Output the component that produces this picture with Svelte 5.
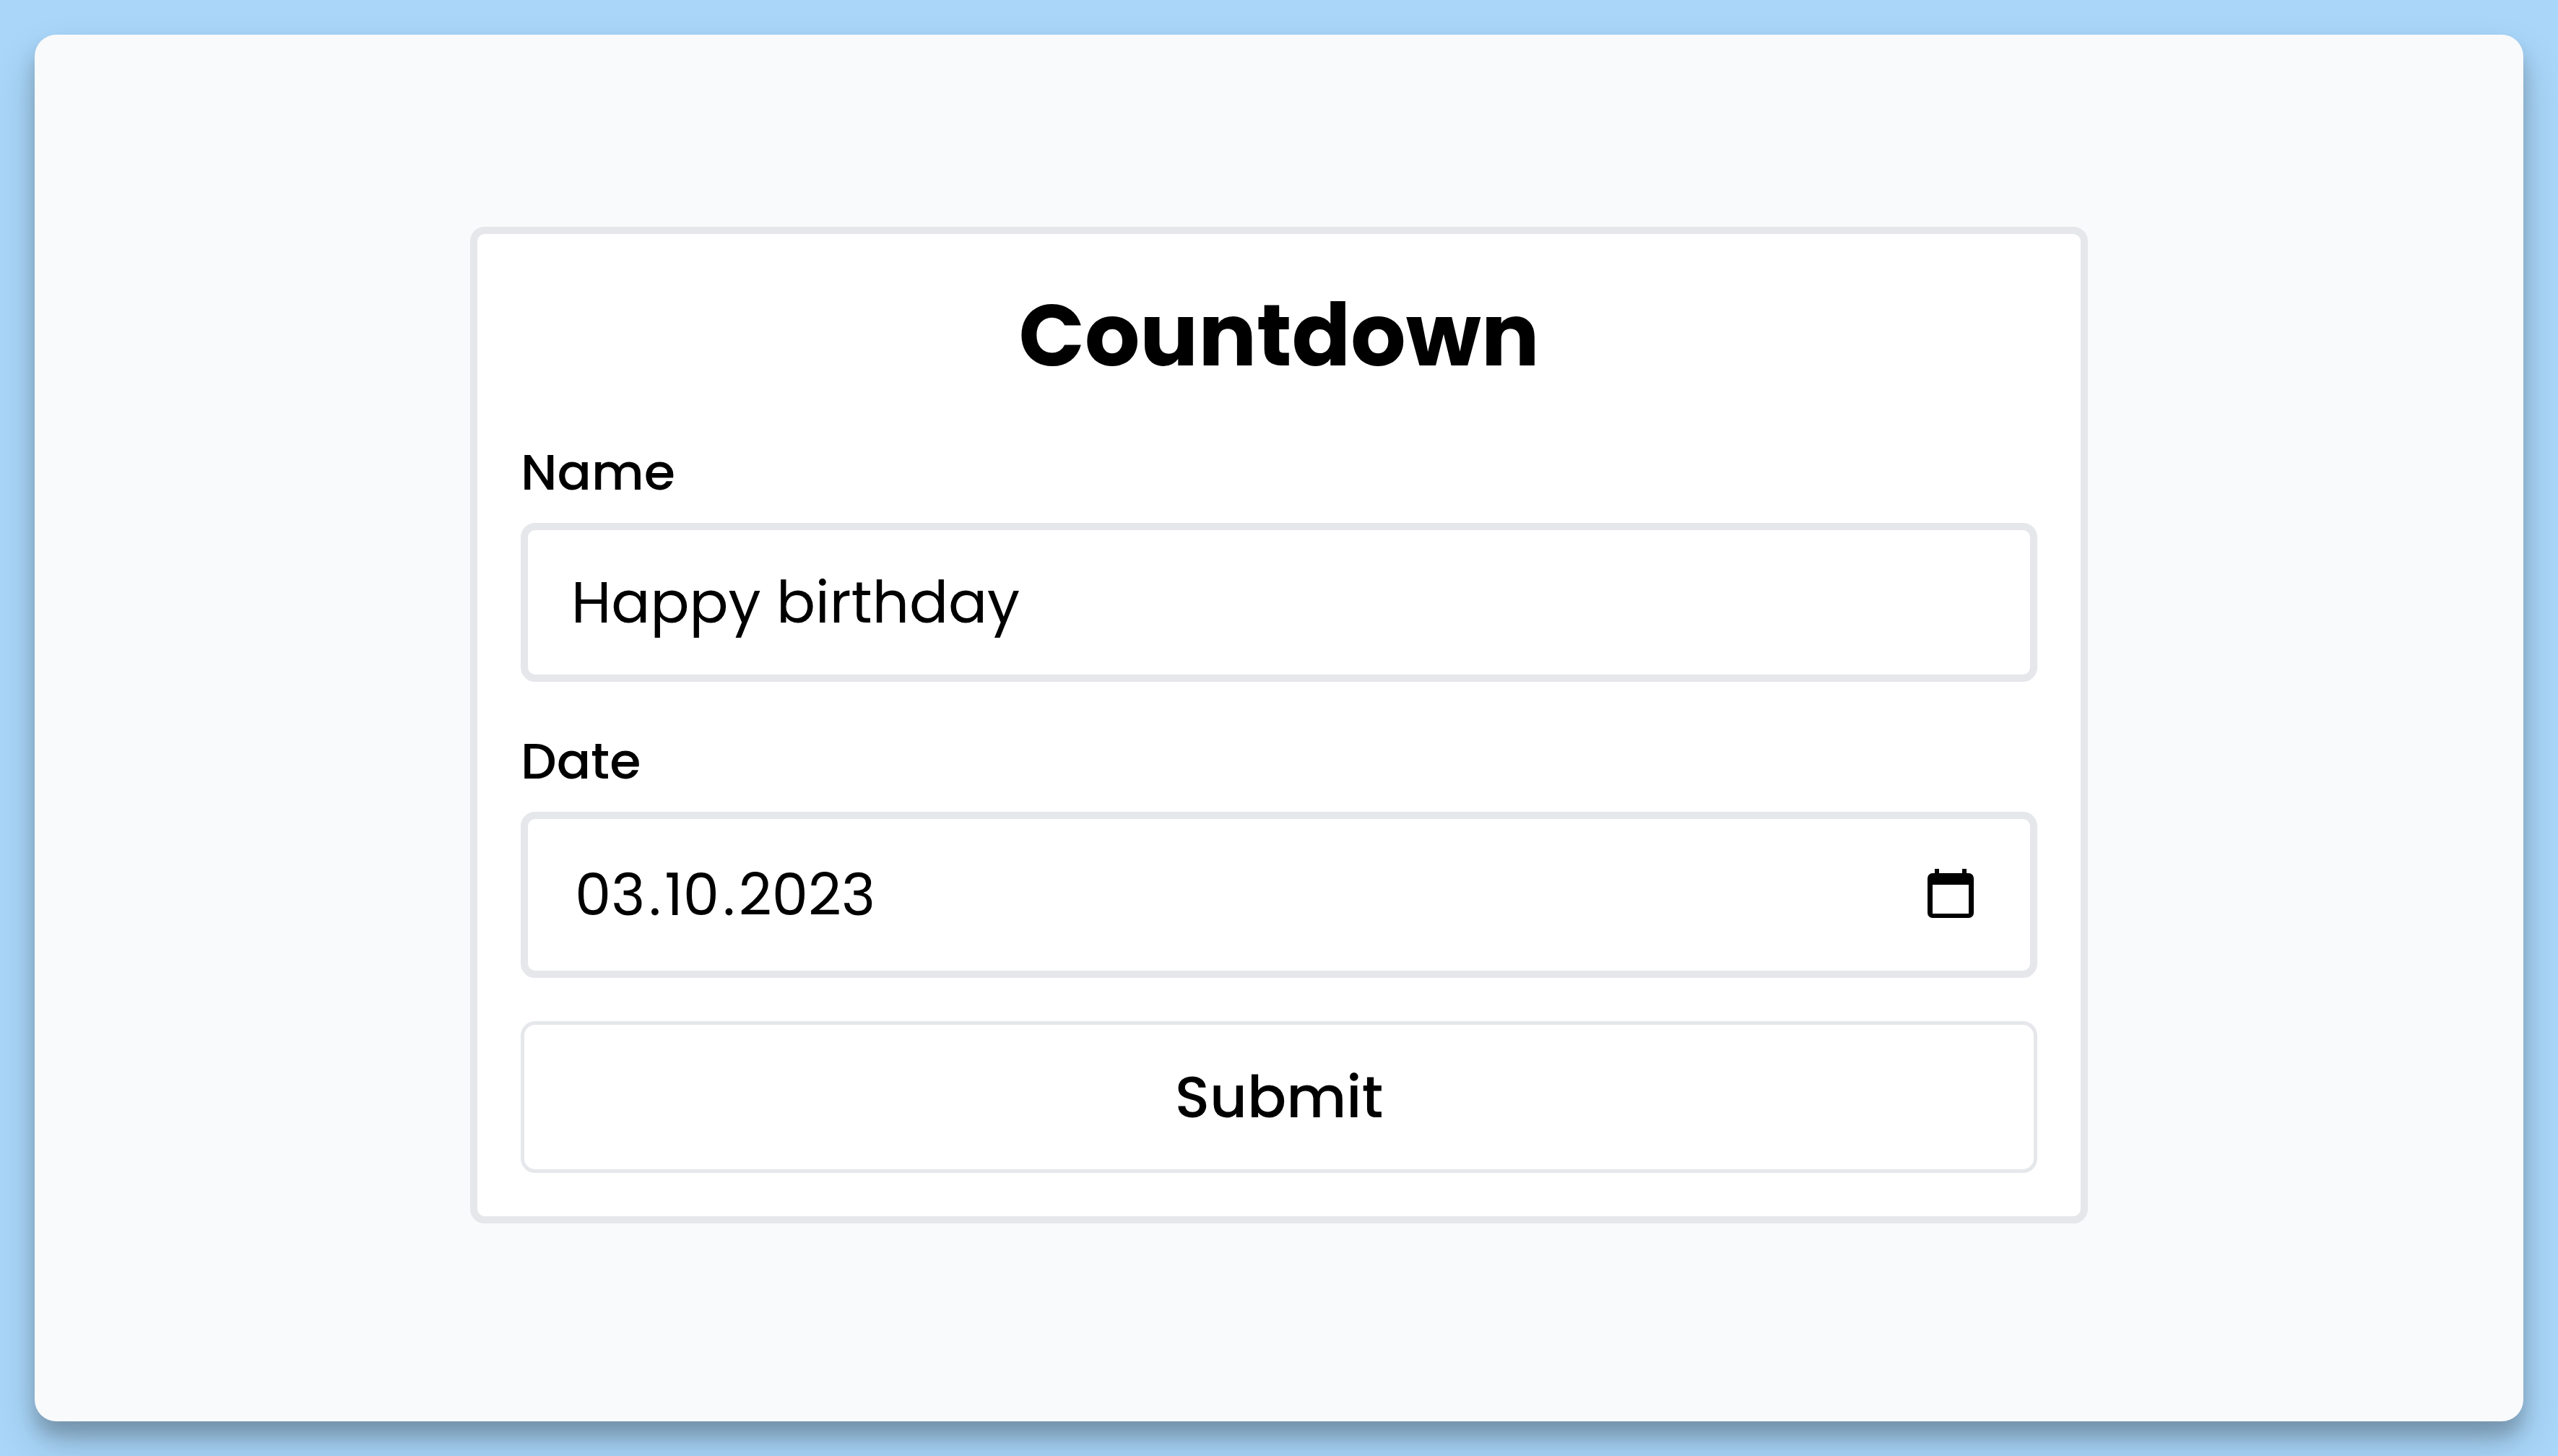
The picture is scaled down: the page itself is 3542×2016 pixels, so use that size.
<script>
  let name = $state('Happy birthday');
  let day = $state('03');
  let month = $state('10');
  let year = $state('2023');
</script>

<main class="backdrop">
  <section class="panel">
    <form class="card" onsubmit={(event) => event.preventDefault()}>
      <h1>Countdown</h1>

      <div class="field">
        <label for="name">Name</label>
        <div class="box">
          <input id="name" class="text" type="text" autocomplete="off" spellcheck="false" bind:value={name} />
        </div>
      </div>

      <div class="field">
        <label for="day">Date</label>
        <div class="box date">
          <div class="parts">
            <input id="day" type="text" inputmode="numeric" maxlength="2" bind:value={day} />
            <span>.</span>
            <input type="text" inputmode="numeric" maxlength="2" aria-label="Month" bind:value={month} />
            <span>.</span>
            <input type="text" inputmode="numeric" maxlength="4" aria-label="Year" bind:value={year} />
          </div>
          <button class="picker" type="button" aria-label="Open calendar">
            <svg viewBox="0 0 64 68" aria-hidden="true">
              <path
                fill-rule="evenodd"
                d="M10 0h6v6h32V0h6v6h3a7 7 0 0 1 7 7v48a7 7 0 0 1-7 7H7a7 7 0 0 1-7-7V13a7 7 0 0 1 7-7h3zM7 22v40h50V22z"
              />
            </svg>
          </button>
        </div>
      </div>

      <button class="submit" type="submit">Submit</button>
    </form>
  </section>
</main>

<style>
  :global(body) {
    margin: 0;
  }

  .backdrop {
    box-sizing: border-box;
    min-height: 100vh;
    padding: 48px;
    display: flex;
    background: #a9d6f9;
    color: #000;
    font-family: Poppins, Inter, sans-serif;
  }

  .panel {
    flex: 1;
    display: flex;
    align-items: center;
    justify-content: center;
    padding-bottom: 8px;
    border-radius: 30px;
    background: #f9fafc;
    box-shadow:
      0 20px 26px rgba(0, 0, 0, 0.2),
      0 30px 60px rgba(0, 0, 0, 0.16);
  }

  .card {
    box-sizing: border-box;
    width: 100%;
    max-width: 2240px;
    padding: 60px;
    display: flex;
    flex-direction: column;
    gap: 60px;
    border: 10px solid #e5e7eb;
    border-radius: 20px;
    background: #fff;
  }

  h1 {
    margin: 0;
    font-size: 120px;
    font-weight: 700;
    line-height: 160px;
    text-align: center;
  }

  .field {
    display: flex;
    flex-direction: column;
    gap: 20px;
  }

  label {
    font-size: 70px;
    font-weight: 500;
    line-height: 100px;
  }

  .box {
    display: flex;
    align-items: center;
    padding: 40px 60px;
    border: 10px solid #e5e7eb;
    border-radius: 20px;
    font-size: 80px;
    line-height: 120px;
  }

  .date {
    padding: 45px 78px 45px 60px;
    justify-content: space-between;
  }

  .parts {
    display: flex;
  }

  input,
  button {
    margin: 0;
    padding: 0;
    border: 0;
    outline: 0;
    background: none;
    color: inherit;
    font: inherit;
  }

  .text {
    flex: 1;
    min-width: 0;
    height: 120px;
  }

  .parts input {
    height: 120px;
    padding: 0 5px;
    field-sizing: content;
  }

  .picker {
    display: flex;
    padding-bottom: 5px;
    cursor: pointer;
  }

  .picker svg {
    width: 64px;
    height: 68px;
    fill: #000;
  }

  .submit {
    padding: 40px 60px;
    border: 5px solid #e5e7eb;
    border-radius: 20px;
    font-size: 80px;
    font-weight: 500;
    line-height: 120px;
    cursor: pointer;
  }
</style>
